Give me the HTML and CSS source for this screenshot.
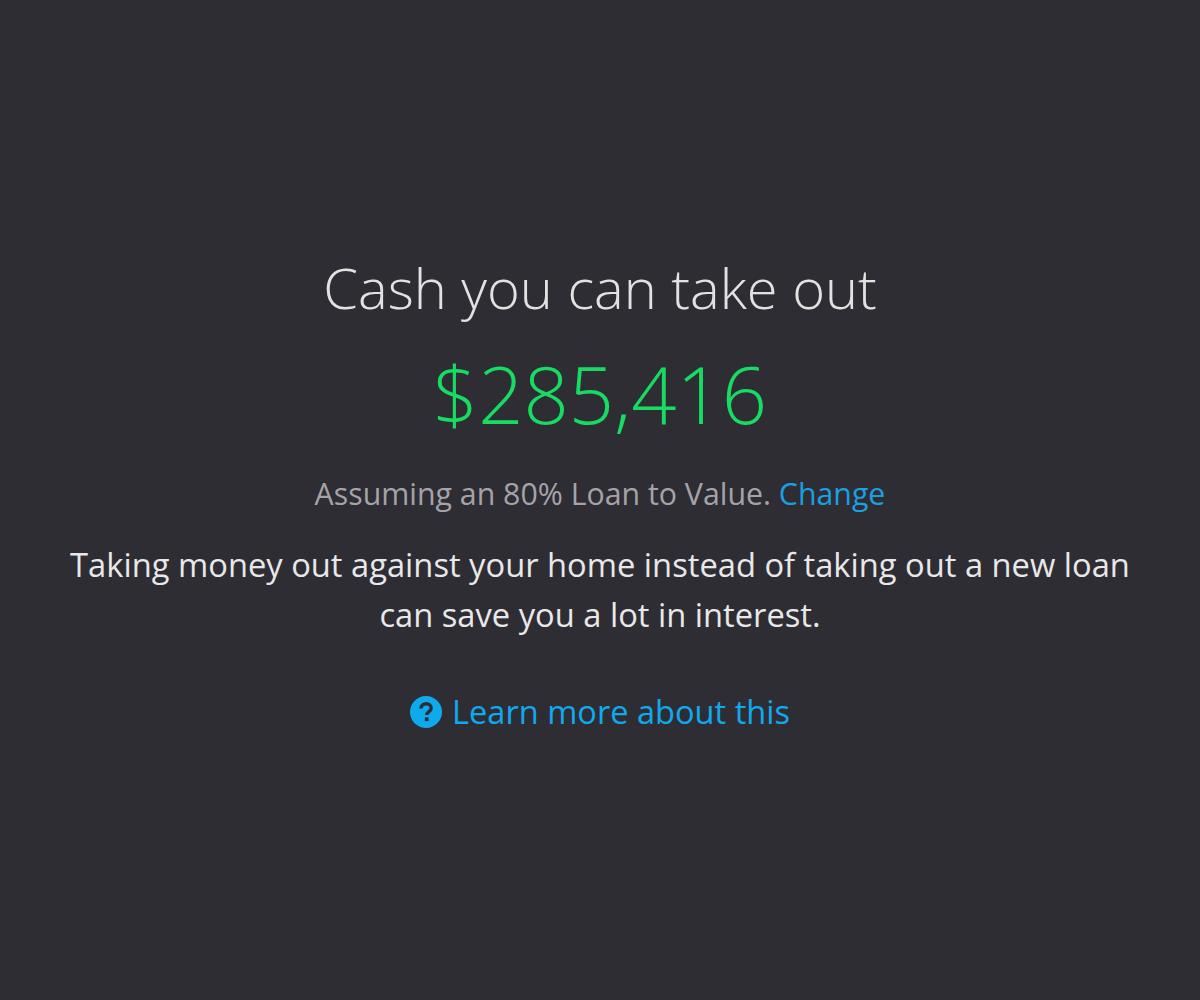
FILE: index.html
```
<!DOCTYPE html>
<html lang="en">
<head>
<meta charset="utf-8">
<title>Cash you can take out</title>
<link rel="stylesheet" href="styles.css">
</head>
<body>
<main class="panel">
  <h1 class="title">Cash you can take out</h1>
  <div class="amount">$285,416</div>
  <p class="assume">Assuming an 80% Loan to Value. <a class="change" href="#">Change</a></p>
  <p class="desc">Taking money out against your home instead of taking out a new loan can save you a lot in interest.</p>
  <a class="learn" href="#">
    <svg class="help" viewBox="0 0 32 32" aria-hidden="true"><circle cx="16" cy="16" r="16" fill="#0fa9ee"/><path d="M11 12.6c0-3 2.200-4.800 5.200-4.800s5 1.700 5 4.200c0 3.600-4.400 3.700-4.400 7" fill="none" stroke="#2f2d34" stroke-width="3.400"/><rect x="14.900" y="21.400" width="3.700" height="3.700" fill="#2f2d34"/></svg>
    <span>Learn more about this</span>
  </a>
</main>
</body>
</html>
```
FILE: styles.css
```
html, body {
  margin: 0;
  height: 100%;
}
body {
  background: #2f2d34;
  font-family: "Open Sans", sans-serif;
}
.panel {
  box-sizing: border-box;
  width: 1200px;
  padding: 254px 60px 0;
  text-align: center;
}
.title {
  margin: 0;
  font-size: 56px;
  font-weight: 300;
  line-height: 66px;
  color: #e2e2e2;
}
.amount {
  margin-top: 27px;
  font-size: 79.400px;
  font-weight: 300;
  line-height: 92px;
  color: #17dc62;
}
.assume {
  margin: 35px 0 0;
  font-size: 30.300px;
  line-height: 40px;
  color: #a5a3a8;
}
.change {
  color: #1a9fe0;
  text-decoration: none;
}
.desc {
  margin: 26px 0 0;
  font-size: 32.700px;
  line-height: 50px;
  color: #e8e8e8;
}
.learn {
  display: inline-flex;
  align-items: center;
  gap: 10px;
  margin-top: 50px;
  font-size: 32.600px;
  line-height: 44px;
  color: #0fa9ee;
  text-decoration: none;
}
.help {
  width: 32px;
  height: 32px;
}
```
